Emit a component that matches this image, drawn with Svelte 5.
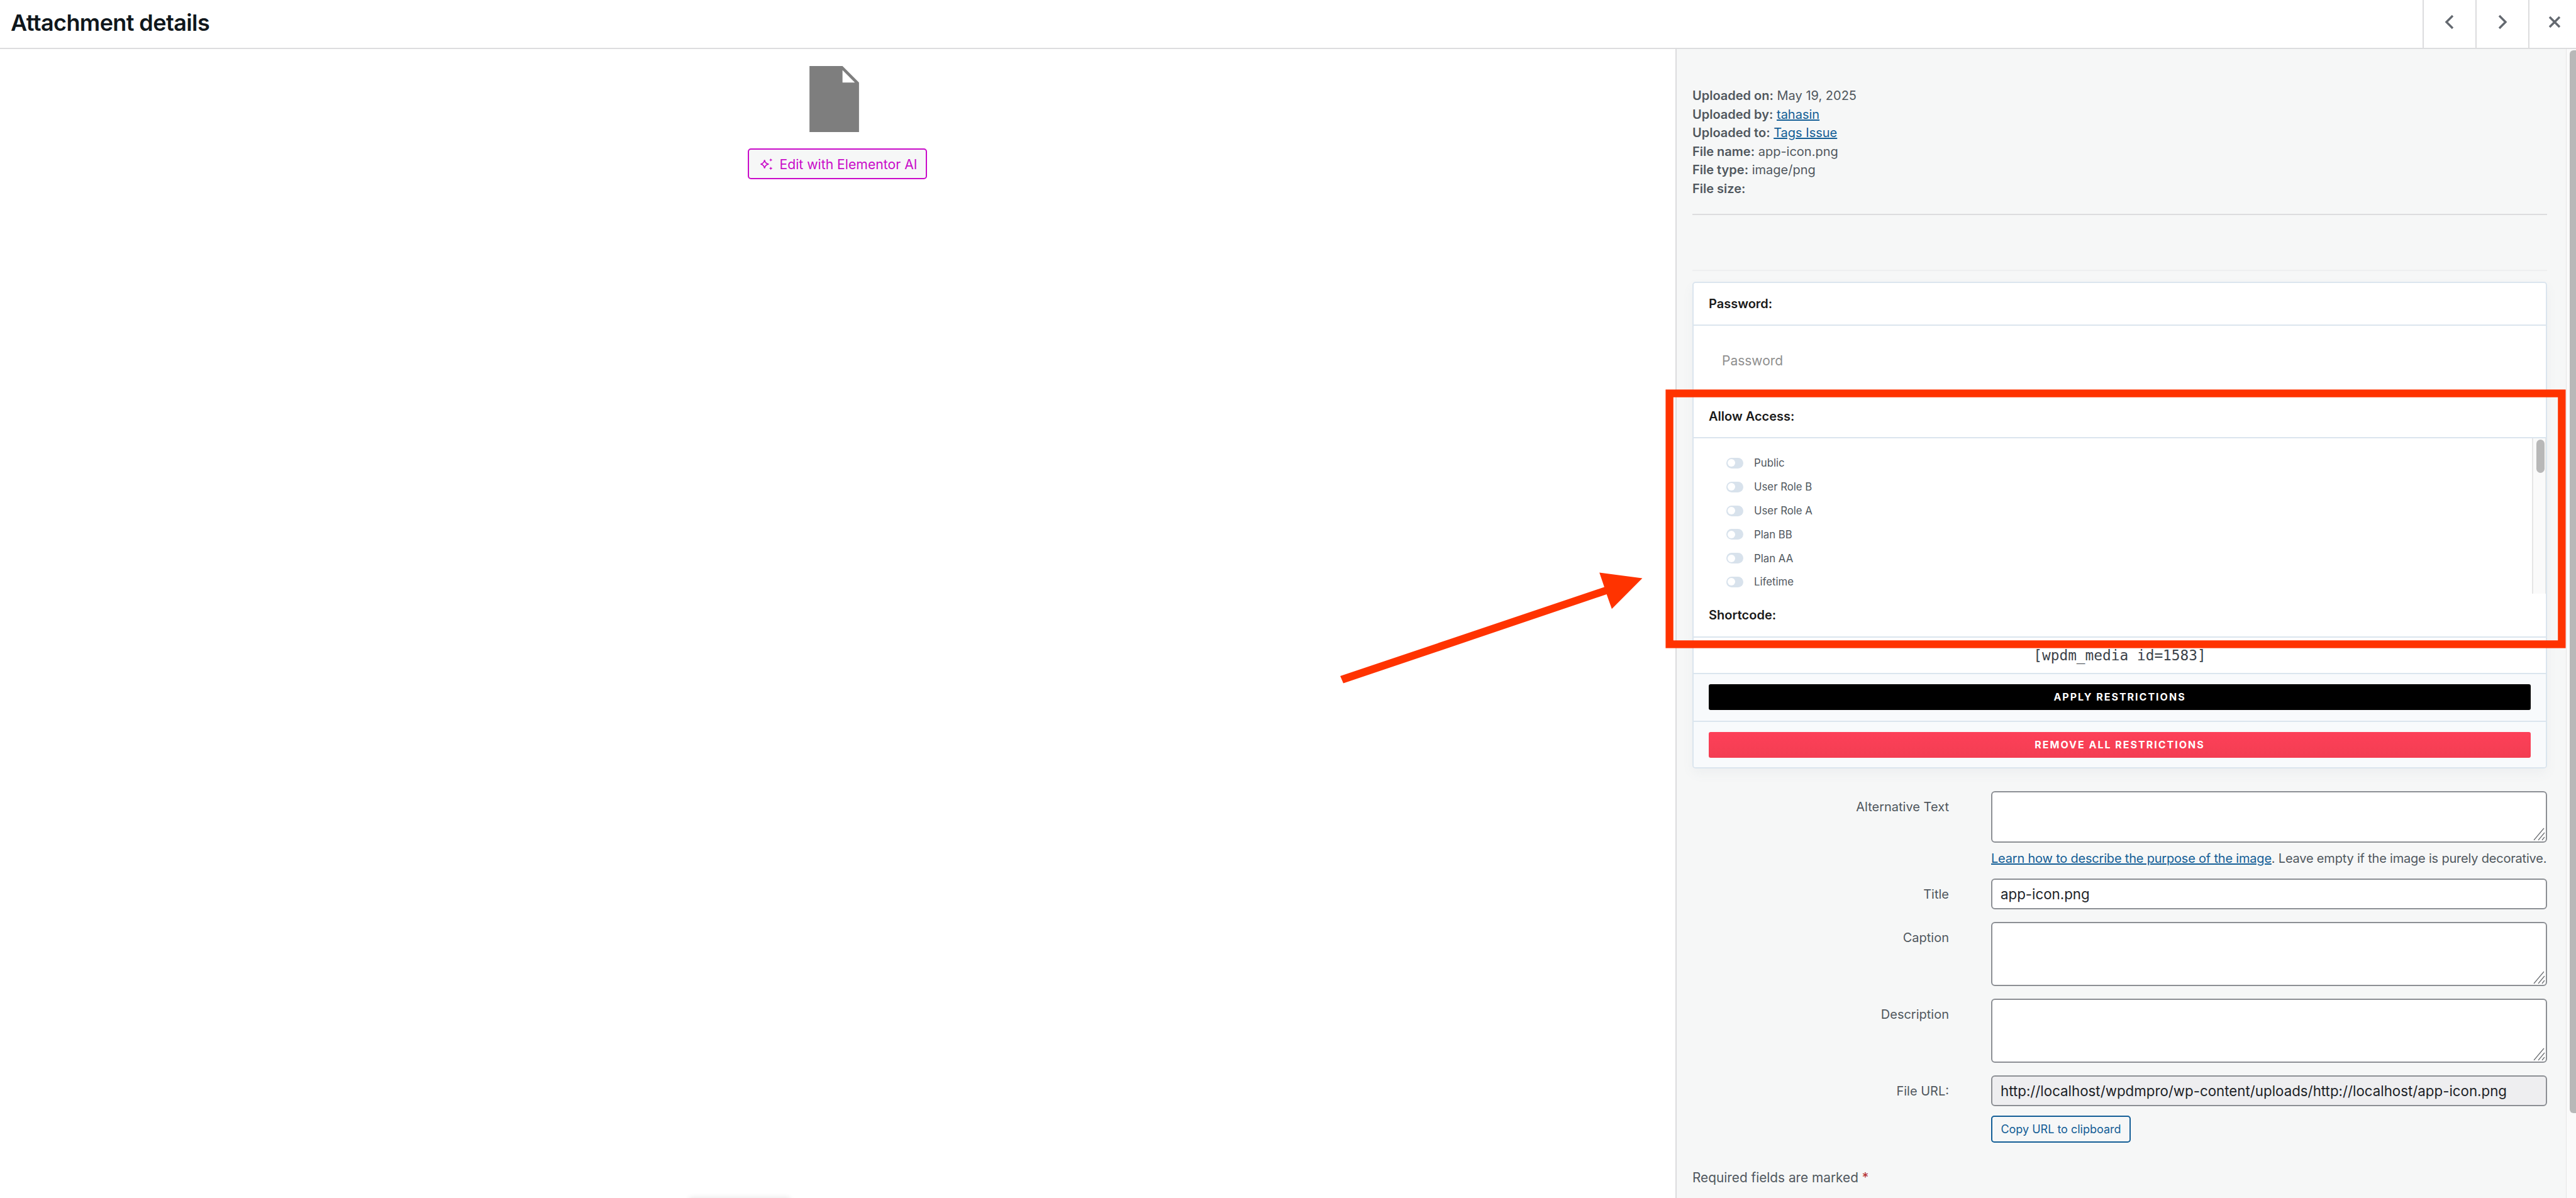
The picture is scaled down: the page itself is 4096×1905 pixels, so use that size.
<script>
  const meta = [
    { label: 'Uploaded on:', value: 'May 19, 2025' },
    { label: 'Uploaded by:', link: 'tahasin' },
    { label: 'Uploaded to:', link: 'Tags Issue' },
    { label: 'File name:', value: 'app-icon.png' },
    { label: 'File type:', value: 'image/png' },
    { label: 'File size:', value: '' }
  ];
  const roles = ['Public', 'User Role B', 'User Role A', 'Plan BB', 'Plan AA', 'Lifetime'];
</script>

{#snippet grip()}
  <svg class="grip" width="19" height="21" viewBox="0 0 19 21">
    <path d="M1 20 L17 1 M8 20 L18 8 M14 20 L18 15" />
  </svg>
{/snippet}

<div class="page">
  <header class="topbar">
    <h1>Attachment details</h1>
    <div class="nav">
      <button class="nav-btn" aria-label="Previous">
        <svg width="16" height="24" viewBox="0 0 16 24"><path d="M13 2 L3 12 L13 22" /></svg>
      </button>
      <button class="nav-btn" aria-label="Next">
        <svg width="16" height="24" viewBox="0 0 16 24"><path d="M3 2 L13 12 L3 22" /></svg>
      </button>
      <button class="nav-btn last" aria-label="Close">
        <svg width="20" height="20" viewBox="0 0 20 20"><path d="M2 2 L18 18 M18 2 L2 18" /></svg>
      </button>
    </div>
  </header>

  <div class="body">
    <main class="preview">
      <svg class="file-icon" width="79" height="105" viewBox="0 0 96 128">
        <path fill="#7e7e7e" d="M0 0H64L96 32V128H0Z" />
        <path fill="#fff" d="M64 8V32H88Z" />
      </svg>
      <button class="ai-btn">
        <svg width="20" height="20" viewBox="0 0 24 24">
          <path fill="none" stroke="currentColor" stroke-width="2" d="M8 4 C8.8 9 11 11.2 16 12 C11 12.8 8.8 15 8 20 C7.2 15 5 12.8 0.5 12 C5 11.2 7.2 9 8 4Z" />
          <path fill="currentColor" d="M20 0.5 C20.3 2.6 21.4 3.7 23.5 4 C21.4 4.3 20.3 5.4 20 7.5 C19.7 5.4 18.6 4.3 16.5 4 C18.6 3.7 19.7 2.6 20 0.5Z" />
          <path fill="currentColor" d="M20 16.5 C20.3 18.6 21.4 19.7 23.5 20 C21.4 20.3 20.3 21.4 20 23.5 C19.7 21.4 18.6 20.3 16.5 20 C18.6 19.7 19.7 18.6 20 16.5Z" />
        </svg>
        Edit with Elementor AI
      </button>
      <div class="edge-shadow"></div>
    </main>

    <aside class="details">
      <div class="meta">
        {#each meta as m}
          <div>
            <strong>{m.label}</strong>
            {#if m.link}<a href="#top">{m.link}</a>{:else}{m.value}{/if}
          </div>
        {/each}
      </div>
      <div class="rule"></div>
      <div class="rule faint"></div>

      <section class="card">
        <div class="card-head">Password:</div>
        <div class="password-body">
          <input class="password" placeholder="Password" />
        </div>
        <div class="card-head">Allow Access:</div>
        <div class="access">
          <ul>
            {#each roles as role}
              <li><span class="toggle"><span class="knob"></span></span>{role}</li>
            {/each}
          </ul>
          <div class="mini-track"><div class="mini-thumb"></div></div>
        </div>
        <div class="card-head tall">Shortcode:</div>
        <div class="shortcode">[wpdm_media id=1583]</div>
        <div class="card-foot"><button class="action apply">Apply Restrictions</button></div>
        <div class="card-foot end"><button class="action remove">Remove All Restrictions</button></div>
      </section>

      <div class="field first">
        <span class="field-label">Alternative Text</span>
        <div class="control">
          <div class="area"><textarea class="area-short"></textarea>{@render grip()}</div>
          <p class="help"><a href="#top">Learn how to describe the purpose of the image</a>. Leave empty if the image is purely decorative.</p>
        </div>
      </div>
      <div class="field title-field">
        <span class="field-label">Title</span>
        <div class="control"><input class="text" value="app-icon.png" /></div>
      </div>
      <div class="field">
        <span class="field-label">Caption</span>
        <div class="control"><div class="area"><textarea></textarea>{@render grip()}</div></div>
      </div>
      <div class="field">
        <span class="field-label">Description</span>
        <div class="control"><div class="area"><textarea></textarea>{@render grip()}</div></div>
      </div>
      <div class="field">
        <span class="field-label">File URL:</span>
        <div class="control">
          <input class="text readonly" readonly value="http://localhost/wpdmpro/wp-content/uploads/http://localhost/app-icon.png" />
          <button class="copy">Copy URL to clipboard</button>
        </div>
      </div>
      <p class="required">Required fields are marked <span>*</span></p>
    </aside>

    <div class="page-scroll"><div class="page-thumb"></div></div>
  </div>

  <svg class="annotation" viewBox="0 0 4980 2316" width="4096" height="1905">
    <rect x="3227.5" y="760.5" width="1725" height="485" fill="none" stroke="#ff3300" stroke-width="15" />
    <polygon fill="#ff3300" points="2591,1307 3101.5,1135 3092,1107 3175,1118 3116,1177 3106,1149 2597,1321" />
  </svg>
</div>

<style>
  :global(body) {
    margin: 0;
    background: #fff;
  }

  .page {
    position: relative;
    width: 4096px;
    height: 1905px;
    overflow: hidden;
    display: flex;
    flex-direction: column;
    font-family: Inter, "Liberation Sans", sans-serif;
    font-size: 20px;
    color: #50575e;
  }

  /* top bar */
  .topbar {
    height: 76px;
    flex: none;
    display: flex;
    align-items: center;
    justify-content: space-between;
    border-bottom: 2px solid #dcdcde;
    background: #fff;
  }

  h1 {
    margin: 0 0 5px 17px;
    font-size: 36px;
    font-weight: 600;
    letter-spacing: -0.6px;
    color: #10171c;
  }

  .nav {
    display: flex;
    height: 100%;
  }

  .nav-btn {
    width: 84px;
    height: 100%;
    padding: 0 0 6px;
    display: flex;
    align-items: center;
    justify-content: center;
    background: none;
    border: 0;
    border-left: 2px solid #dcdcde;
  }

  .nav-btn.last {
    width: 76px;
    padding-left: 6px;
  }

  .nav-btn path {
    fill: none;
    stroke: #646970;
    stroke-width: 3.4;
  }

  .body {
    flex: 1;
    display: flex;
    min-height: 0;
  }

  /* preview pane */
  .preview {
    position: relative;
    width: 2664px;
    flex: none;
    display: flex;
    flex-direction: column;
    align-items: center;
    padding-top: 27px;
    box-sizing: border-box;
  }

  .file-icon {
    margin-left: -11px;
  }

  .ai-btn {
    margin-top: 26px;
    width: 285px;
    height: 49px;
    margin-right: 2px;
    display: flex;
    align-items: center;
    justify-content: flex-start;
    gap: 11px;
    padding: 0 0 0 18px;
    box-sizing: border-box;
    background: #f6f7f7;
    border: 2px solid #c90bc9;
    border-radius: 5px;
    color: #c90bc9;
    font: 400 21.2px Inter, "Liberation Sans", sans-serif;
  }

  .edge-shadow {
    position: absolute;
    left: 1096px;
    bottom: -6px;
    width: 160px;
    height: 6px;
    box-shadow: 0 0 8px rgba(0, 0, 0, 0.12);
  }

  /* details sidebar */
  .details {
    width: 1416px;
    flex: none;
    box-sizing: border-box;
    padding: 60px 30px 0 25px;
    background: #f6f7f7;
    border-left: 2px solid #dcdcde;
  }

  .meta {
    line-height: 29.6px;
  }

  .meta strong {
    font-weight: 600;
  }

  a {
    color: #135e96;
  }

  .rule {
    height: 2px;
    margin-top: 24px;
    background: #dcdcde;
  }

  .rule.faint {
    margin-top: 87px;
    background: #eeeff0;
  }

  /* restrictions card */
  .card {
    margin-top: 17px;
    border: 2px solid #dbe5ee;
    border-radius: 5px;
    background: #fff;
    box-shadow: 0 8px 18px rgba(100, 120, 140, 0.06);
  }

  .card-head {
    height: 66px;
    display: flex;
    align-items: center;
    padding-left: 24px;
    border-bottom: 2px solid #dbe5ee;
    font-weight: 600;
    color: #1a1a1a;
  }

  .card-head.tall {
    height: 68px;
  }

  .password-body {
    height: 111px;
    display: flex;
    align-items: center;
  }

  .password {
    width: 100%;
    margin-left: 45px;
    padding: 0;
    border: 0;
    outline: 0;
    background: none;
    font: 400 21px Inter, "Liberation Sans", sans-serif;
  }

  .password::placeholder {
    color: #8f8f8f;
  }

  .access {
    position: relative;
    height: 247px;
    overflow: hidden;
  }

  ul {
    margin: 0;
    padding: 21px 0 0 52px;
    list-style: none;
  }

  li {
    height: 37.8px;
    display: flex;
    align-items: center;
    gap: 17px;
    font-size: 16.8px;
  }

  .toggle {
    position: relative;
    width: 27px;
    height: 17px;
    border-radius: 9px;
    background: #d8e2ec;
  }

  .knob {
    position: absolute;
    left: 2px;
    top: 2.5px;
    width: 12px;
    height: 12px;
    border-radius: 50%;
    background: #fff;
  }

  .mini-track {
    position: absolute;
    top: 0;
    right: 0;
    width: 22px;
    height: 100%;
    box-sizing: border-box;
    border-left: 2px solid #e6e6e6;
    border-right: 1px solid #e6e6e6;
    background: #fafafa;
  }

  .mini-thumb {
    width: 13px;
    height: 53px;
    margin: 2px 0 0 5px;
    border-radius: 7px;
    background: #b8b8b8;
  }

  .shortcode {
    height: 56px;
    display: flex;
    align-items: center;
    justify-content: center;
    border-bottom: 2px solid #dbe5ee;
    font-family: "DejaVu Sans Mono", monospace;
    font-size: 22.8px;
    color: #3c434a;
  }

  .card-foot {
    padding: 16px 24px 17px;
    background: #f8fafc;
    border-bottom: 2px solid #dbe5ee;
  }

  .card-foot.end {
    padding-bottom: 15px;
    border-bottom: 0;
    border-radius: 0 0 4px 4px;
  }

  .action {
    display: block;
    width: 100%;
    height: 41px;
    border: 0;
    border-radius: 3px;
    color: #fff;
    font: 700 16px Inter, "Liberation Sans", sans-serif;
    letter-spacing: 2px;
    text-transform: uppercase;
  }

  .apply {
    background: #000;
  }

  .remove {
    background: linear-gradient(#fd4059, #f33e52);
  }

  /* attachment fields */
  .field {
    display: flex;
    margin-top: 20px;
  }

  .field.first {
    margin-top: 36px;
  }

  .field.title-field {
    margin-top: 17px;
  }

  .field-label {
    width: 408px;
    margin-right: 67px;
    padding-top: 11px;
    text-align: right;
    line-height: 29.6px;
    flex: none;
  }

  .control {
    flex: 1;
    min-width: 0;
  }

  .area {
    position: relative;
  }

  .grip {
    position: absolute;
    right: 3px;
    bottom: 3px;
    pointer-events: none;
  }

  .grip path {
    fill: none;
    stroke: #6f7276;
    stroke-width: 1.3;
  }

  textarea,
  .text {
    display: block;
    width: 100%;
    box-sizing: border-box;
    background: #fff;
    border: 2px solid #8c8f94;
    border-radius: 6px;
    color: #1d2327;
    font: 400 22.3px Inter, "Liberation Sans", sans-serif;
    outline: 0;
  }

  textarea {
    height: 102px;
    padding: 4px 10px;
    resize: none;
  }

  textarea.area-short {
    height: 82px;
  }

  .text {
    height: 49px;
    padding: 0 13px;
  }

  .text.readonly {
    background: #eeeef0;
  }

  .help {
    margin: 11px 0 0;
    line-height: 29.6px;
    letter-spacing: -0.2px;
    white-space: nowrap;
  }

  .copy {
    display: block;
    width: 222px;
    height: 43px;
    margin-top: 15px;
    padding: 0;
    background: #f6f7f7;
    border: 2px solid #135e96;
    border-radius: 5px;
    color: #135e96;
    font: 400 18px Inter, "Liberation Sans", sans-serif;
  }

  .required {
    margin: 41px 0 0;
    font-size: 20.8px;
    line-height: 29.6px;
  }

  .required span {
    color: #b32d2e;
  }

  /* page scrollbar */
  .page-scroll {
    width: 16px;
    flex: none;
    box-sizing: border-box;
    padding: 2px 0 0 5px;
    background: #fafafa;
    border-left: 1px solid #e6e6e6;
  }

  .page-thumb {
    height: 1690px;
    border-radius: 6px 0 0 6px;
    background: #b8b8b8;
  }

  /* red markup drawn over the screenshot */
  .annotation {
    position: absolute;
    inset: 0;
    pointer-events: none;
  }
</style>
